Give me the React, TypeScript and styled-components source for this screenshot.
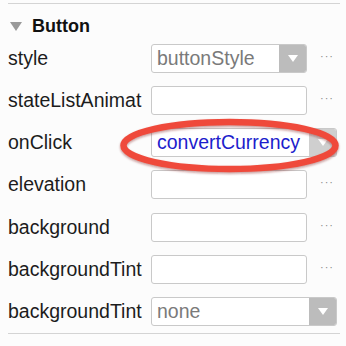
import React from "react";
import styled, { createGlobalStyle } from "styled-components";

const GlobalStyle = createGlobalStyle`
  html, body {
    margin: 0;
    padding: 0;
    background: #fcfcfc;
  }
  body {
    font-family: "Liberation Sans", Arial, sans-serif;
  }
`;

const Panel = styled.div`
  position: relative;
  width: 346px;
  height: 346px;
  padding: 3px 6px 0 8px;
  box-sizing: border-box;
  overflow: hidden;
`;

const Divider = styled.div`
  height: 1px;
  background: #d4d4d4;
`;

const Header = styled.div`
  display: flex;
  align-items: center;
  gap: 10px;
  height: 33px;
  padding-top: 11px;
  box-sizing: border-box;
  font-size: 18px;
  font-weight: bold;
  color: #111;
`;

const Caret = styled.span`
  width: 0;
  height: 0;
  margin-left: 2px;
  border-left: 6px solid transparent;
  border-right: 6px solid transparent;
  border-top: 9px solid #9a9a9a;
`;

const Row = styled.div`
  display: flex;
  align-items: center;
  height: 42.25px;
`;

const Label = styled.div`
  flex: 0 0 136px;
  margin-right: 7px;
  white-space: nowrap;
  font-size: 19.5px;
  color: #1c1c1c;
`;

const Field = styled.div<{ $wide?: boolean }>`
  position: relative;
  display: flex;
  align-items: stretch;
  width: ${(p) => (p.$wide ? "186px" : "156px")};
  height: 29px;
  box-sizing: border-box;
  border: 1px solid #c9c9c9;
  border-radius: 3px;
  background: #fff;
  overflow: hidden;
`;

const Value = styled.div<{ $link?: boolean }>`
  flex: 1;
  display: flex;
  align-items: center;
  padding-left: 5px;
  font-size: 19.5px;
  white-space: nowrap;
  color: ${(p) => (p.$link ? "#1d1dcc" : "#7a7a7a")};
`;

const ArrowBox = styled.div<{ $light?: boolean }>`
  flex: 0 0 27px;
  display: flex;
  align-items: center;
  justify-content: center;
  background: ${(p) => (p.$light ? "#cfcfcf" : "#bcbcbc")};
`;

const ArrowDown = styled.span`
  width: 0;
  height: 0;
  border-left: 5px solid transparent;
  border-right: 5px solid transparent;
  border-top: 7px solid #fff;
`;

const Dots = styled.span`
  margin-left: 13px;
  font-size: 11px;
  letter-spacing: 1px;
  color: #8a8a8a;
  line-height: 1;
  padding-bottom: 4px;
`;

const Highlight = styled.svg`
  position: absolute;
  left: 117px;
  top: 116px;
  pointer-events: none;
`;

type Prop = {
  name: string;
  value?: string;
  kind: "text" | "select" | "wideSelect" | "link";
};

const props: Prop[] = [
  { name: "style", value: "buttonStyle", kind: "select" },
  { name: "stateListAnimat", kind: "text" },
  { name: "onClick", value: "convertCurrency", kind: "link" },
  { name: "elevation", kind: "text" },
  { name: "background", kind: "text" },
  { name: "backgroundTint", kind: "text" },
  { name: "backgroundTint", value: "none", kind: "wideSelect" },
];

const PropertyRow: React.FC<{ prop: Prop }> = ({ prop }) => {
  const wide = prop.kind === "wideSelect" || prop.kind === "link";
  const hasArrow = prop.kind !== "text";
  return (
    <Row>
      <Label>{prop.name}</Label>
      <Field $wide={wide}>
        <Value $link={prop.kind === "link"}>{prop.value}</Value>
        {hasArrow && (
          <ArrowBox $light={prop.kind === "link"}>
            <ArrowDown />
          </ArrowBox>
        )}
      </Field>
      {!wide && <Dots>···</Dots>}
    </Row>
  );
};

const App: React.FC = () => {
  return (
    <>
      <GlobalStyle />
      <Panel>
        <Divider />
        <Header>
          <Caret />
          Button
        </Header>
        {props.map((p, i) => (
          <PropertyRow key={i} prop={p} />
        ))}
        <Divider />
        <Highlight width="226" height="60" viewBox="0 0 226 60">
          <defs>
            <filter id="sh" x="-10%" y="-30%" width="120%" height="160%">
              <feDropShadow dx="0" dy="1.5" stdDeviation="1.2" floodColor="#7a1d14" floodOpacity="0.45" />
            </filter>
          </defs>
          <ellipse
            cx="112.5"
            cy="29.5"
            rx="106"
            ry="23.5"
            fill="none"
            stroke="#ef4a3b"
            strokeWidth="6.5"
            filter="url(#sh)"
          />
        </Highlight>
      </Panel>
    </>
  );
};

export default App;
